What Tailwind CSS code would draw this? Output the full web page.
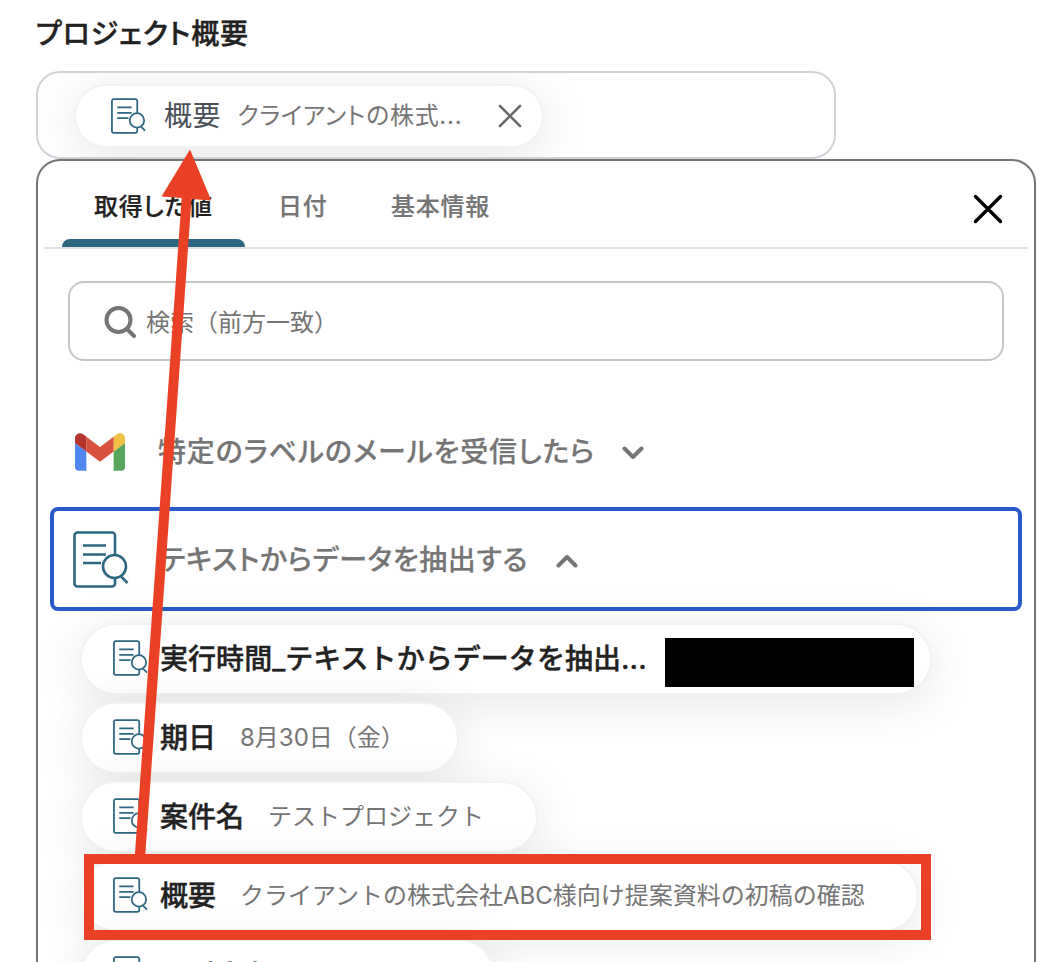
<!DOCTYPE html>
<html lang="ja">
<head>
<meta charset="utf-8">
<title>プロジェクト概要</title>
<script src="https://cdn.jsdelivr.net/npm/@tailwindcss/browser@4"></script>
</head>
<body class="relative h-[962px] w-[1046px] overflow-hidden bg-white font-[Inter,'Noto_Sans_CJK_JP',sans-serif] text-[#222]">
<svg class="hidden">
  <symbol id="doc" viewBox="0 0 56 57">
    <g fill="none" stroke="currentColor">
      <path d="M42 24V4.500a3 3 0 0 0-3-3H4.500a3 3 0 0 0-3 3v48a3 3 0 0 0 3 3H39a3 3 0 0 0 3-3V47"/>
      <path d="M10 14.500h23M10 23.500h23M10 32h18"/>
      <circle cx="41.500" cy="35.500" r="11.500"/>
      <path d="M48 45.500l6.500 6.500"/>
    </g>
  </symbol>
</svg>

<main class="flex h-[1010px] flex-col pl-9">
  <h1 class="h-[71px] shrink-0 pt-[14px] text-[28px] leading-[40px] font-medium tracking-[0.03em] [-webkit-text-stroke:0.4px] [font-feature-settings:'palt']">プロジェクト概要</h1>

  <div class="flex h-[88px] w-[800px] shrink-0 items-start overflow-hidden rounded-3xl border-2 border-[#cdd3d8] pt-[11px] pl-[36px]">
    <div class="flex h-16 w-[470px] items-center rounded-full border-2 border-[#f2f2f2] bg-white pl-[35px] shadow-[0_8px_48px_rgba(0,0,0,0.1)]">
      <svg class="h-9 w-[35px] shrink-0 stroke-[2.800] text-[#2d6781]"><use href="#doc"/></svg>
      <span class="ml-[18px] text-[28px] leading-10 tracking-[0.02em] text-[#484f57]">概要</span>
      <span class="ml-[16px] w-[232px] text-2xl tracking-[0.03em] whitespace-nowrap text-[#757575] [font-feature-settings:'palt']">クライアントの株式...</span>
      <svg class="ml-auto mr-[20px] size-6 shrink-0" viewBox="0 0 24 24" fill="none" stroke="#6b6b6b" stroke-width="2.600" stroke-linecap="round"><path d="M2 2l20 20M22 2L2 22"/></svg>
    </div>
  </div>

  <section class="flex w-[1000px] grow flex-col rounded-t-3xl border-2 border-b-0 border-[#757575] bg-white">
    <nav class="mx-[6px] flex h-[88px] shrink-0 border-b-2 border-[#e2e2e2] pl-[18px] text-2xl leading-9 font-medium tracking-[0.03em] text-[#757575] [-webkit-text-stroke:0.2px] [font-feature-settings:'palt']">
      <div class="flex h-[86px] w-[183px] flex-col justify-between pt-[28px] text-[#222]">
        <span class="pl-8 whitespace-nowrap">取得した値</span>
        <span class="h-2 rounded-t-lg bg-[#2d6781]"></span>
      </div>
      <span class="w-[113px] pt-[28px] pl-[33px]">日付</span>
      <span class="pt-[28px] pl-[33px]">基本情報</span>
      <svg class="mt-[33px] mr-[25px] ml-auto size-[30px]" viewBox="0 0 30 30" fill="none" stroke="#000" stroke-width="3.400" stroke-linecap="round"><path d="M2.500 2.500l25 25M27.500 2.500l-25 25"/></svg>
    </nav>

    <div class="mt-8 ml-[30px] flex h-20 w-[936px] shrink-0 items-center rounded-2xl border-2 border-[#c6c6c6] pl-[34px] text-2xl text-[#757575]">
      <svg class="mt-px size-8" viewBox="0 0 32 32" fill="none" stroke="#757575" stroke-width="4" stroke-linecap="round"><circle cx="14.500" cy="14" r="12"/><path d="M23 23l7 7"/></svg>
      <span class="mt-[3px] ml-[10px]">検索（前方一致）</span>
    </div>

    <div class="mt-[38px] ml-3 flex h-[104px] w-[972px] shrink-0 items-center pl-[25px]">
      <svg class="mt-px h-[38px] w-[50px]" viewBox="52 42 88 66"><path fill="#4f86ef" d="M58 108h14V74L52 59v43c0 3.320 2.690 6 6 6"/><path fill="#58a65c" d="M120 108h14c3.320 0 6-2.690 6-6V59l-20 15"/><path fill="#f1bf42" d="M120 48v26l20-15v-8c0-7.420-8.470-11.650-14.400-7.200"/><path fill="#d85140" d="M72 74V48l24 18 24-18v26L96 92"/><path fill="#b3342b" d="M52 51v8l20 15V48l-5.600-4.200C60.470 39.350 52 43.580 52 51"/></svg>
      <span class="mt-[2px] ml-[33px] w-[441px] text-[28px] leading-10 font-medium tracking-[0.03em] whitespace-nowrap text-[#757575] [-webkit-text-stroke:0.2px] [font-feature-settings:'palt']">特定のラベルのメールを受信したら</span>
      <svg class="mt-[3px] ml-[23px] h-[14px] w-[22px]" viewBox="0 0 22 14" fill="none" stroke="#757575" stroke-width="4" stroke-linecap="round" stroke-linejoin="round"><path d="M2.500 2.500l8.500 8.500 8.500-8.500"/></svg>
    </div>
    <div class="mt-1 ml-3 flex h-[104px] w-[972px] shrink-0 items-center rounded-lg border-4 border-[#275bc8] pl-[19px]">
      <svg class="h-[57px] w-[56px] stroke-[2.600] text-[#2d6781]"><use href="#doc"/></svg>
      <span class="mt-[2px] ml-[31px] w-[374px] text-[28px] leading-10 font-medium tracking-[0.022em] whitespace-nowrap text-[#757575] [-webkit-text-stroke:0.2px] [font-feature-settings:'palt']">テキストからデータを抽出する</span>
      <svg class="mt-[3px] ml-[22px] h-[14px] w-[22px]" viewBox="0 0 22 14" fill="none" stroke="#757575" stroke-width="4" stroke-linecap="round" stroke-linejoin="round"><path d="M2.500 11.500L11 3l8.500 8.500"/></svg>
    </div>

    <ul class="mt-[12px] flex shrink-0 flex-col items-start gap-[7px] pl-[42px] text-2xl whitespace-nowrap text-[#757575]">
      <li class="flex h-[72px] w-[852px] items-center rounded-full border-2 border-[#f2f2f2] bg-white pl-[31px] shadow-[0_8px_48px_rgba(0,0,0,0.1)]">
        <svg class="mb-0.5 h-9 w-[35px] stroke-[2.800] text-[#2d6781]"><use href="#doc"/></svg>
        <span class="mt-[2px] ml-[12px] w-[505px] text-[28px] font-medium tracking-[0.002em] text-[#222] [-webkit-text-stroke:0.4px]">実行時間_テキストからデータを抽出...</span>
        <span class="mt-[7px] h-[49px] w-[249px] bg-black"></span>
      </li>
      <li class="flex h-[72px] w-[379px] items-center rounded-full border-2 border-[#f2f2f2] bg-white pl-[31px] shadow-[0_8px_48px_rgba(0,0,0,0.1)]">
        <svg class="mb-0.5 h-9 w-[35px] stroke-[2.800] text-[#2d6781]"><use href="#doc"/></svg>
        <span class="mt-[2px] ml-[12px] text-[28px] font-medium text-[#222] [-webkit-text-stroke:0.4px]">期日</span>
        <span class="ml-6">8月30日（金）</span>
      </li>
      <li class="flex h-[72px] w-[458px] items-center rounded-full border-2 border-[#f2f2f2] bg-white pl-[31px] shadow-[0_8px_48px_rgba(0,0,0,0.1)]">
        <svg class="mb-0.5 h-9 w-[35px] stroke-[2.800] text-[#2d6781]"><use href="#doc"/></svg>
        <span class="mt-[2px] ml-[12px] text-[28px] font-medium text-[#222] [-webkit-text-stroke:0.4px]">案件名</span>
        <span class="ml-6">テストプロジェクト</span>
      </li>
      <li class="flex h-[72px] w-[839px] items-center rounded-full border-2 border-[#f2f2f2] bg-white pl-[31px] shadow-[0_8px_48px_rgba(0,0,0,0.1)]">
        <svg class="mb-0.5 h-9 w-[35px] stroke-[2.800] text-[#2d6781]"><use href="#doc"/></svg>
        <span class="mt-[2px] ml-[12px] text-[28px] font-medium text-[#222] [-webkit-text-stroke:0.4px]">概要</span>
        <span class="ml-6">クライアントの株式会社ABC様向け提案資料の初稿の確認</span>
      </li>
      <li class="flex h-[72px] w-[415px] items-center rounded-full border-2 border-[#f2f2f2] bg-white pl-[31px] shadow-[0_8px_48px_rgba(0,0,0,0.1)]">
        <svg class="mb-0.5 h-9 w-[35px] stroke-[2.800] text-[#2d6781]"><use href="#doc"/></svg>
        <span class="mt-[4px] ml-[12px] text-[28px] font-medium text-[#222] [-webkit-text-stroke:0.4px]">取引先名</span>
      </li>
    </ul>
  </section>
</main>

<div class="absolute top-[854px] left-[84px] h-[86px] w-[847px] border-10 border-[#ea4025]"></div>
<svg class="absolute top-0 left-0 h-[962px] w-[1046px]" viewBox="0 0 1046 962" fill="#ea4025"><path d="M190 149.500L211.300 200.500L191.500 199L145.200 856H134.800L181.700 198L161.500 196.500z"/></svg>
</body>
</html>
